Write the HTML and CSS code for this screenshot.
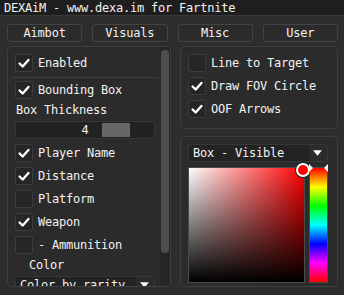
FILE: index.html
```html
<!DOCTYPE html>
<html lang="en">
<head>
    <meta charset="UTF-8">
    <meta name="viewport" content="width=device-width, initial-scale=1.0">
    <title>DEXAiM</title>
    <link rel="stylesheet" href="styles.css">
</head>
<body>
    <div class="window">
        <div class="titlebar">DEXAiM - www.dexa.im for Fartnite</div>

        <div class="tabs">
            <button class="tab">Aimbot</button>
            <button class="tab">Visuals</button>
            <button class="tab">Misc</button>
            <button class="tab">User</button>
        </div>

        <div class="columns">
            <div class="panel panel-left">
                <div class="panel-body">
                    <div class="check on"><span class="box"><svg viewBox="0 0 18 18"><polyline points="4,9.5 7.5,13 14,5.5"/></svg></span>Enabled</div>
                    <div class="separator"></div>
                    <div class="check on"><span class="box"><svg viewBox="0 0 18 18"><polyline points="4,9.5 7.5,13 14,5.5"/></svg></span>Bounding Box</div>
                    <div class="text">Box Thickness</div>
                    <div class="slider">
                        <span class="slider-value">4</span>
                        <span class="slider-grab"></span>
                    </div>
                    <div class="check on"><span class="box"><svg viewBox="0 0 18 18"><polyline points="4,9.5 7.5,13 14,5.5"/></svg></span>Player Name</div>
                    <div class="check on"><span class="box"><svg viewBox="0 0 18 18"><polyline points="4,9.5 7.5,13 14,5.5"/></svg></span>Distance</div>
                    <div class="check"><span class="box"></span>Platform</div>
                    <div class="check on"><span class="box"><svg viewBox="0 0 18 18"><polyline points="4,9.5 7.5,13 14,5.5"/></svg></span>Weapon</div>
                    <div class="check"><span class="box"></span>- Ammunition</div>
                    <div class="text indent">Color</div>
                    <div class="combo">
                        <span class="combo-text">Color by rarity</span>
                        <span class="combo-arrow"><svg viewBox="0 0 18 18"><polygon points="4,6 14,6 9,12"/></svg></span>
                    </div>
                </div>
                <div class="scrollbar"><div class="thumb"></div></div>
            </div>

            <div class="right">
                <div class="panel panel-top">
                    <div class="check"><span class="box"></span>Line to Target</div>
                    <div class="check on"><span class="box"><svg viewBox="0 0 18 18"><polyline points="4,9.5 7.5,13 14,5.5"/></svg></span>Draw FOV Circle</div>
                    <div class="check on"><span class="box"><svg viewBox="0 0 18 18"><polyline points="4,9.5 7.5,13 14,5.5"/></svg></span>OOF Arrows</div>
                </div>
                <div class="panel panel-color">
                    <div class="combo">
                        <span class="combo-text">Box - Visible</span>
                        <span class="combo-arrow"><svg viewBox="0 0 18 18"><polygon points="4,6 14,6 9,12"/></svg></span>
                    </div>
                    <div class="picker">
                        <div class="sv">
                            <span class="sv-marker"></span>
                        </div>
                        <div class="hue">
                            <span class="hue-arrow hue-arrow-left"></span>
                            <span class="hue-arrow hue-arrow-right"></span>
                        </div>
                    </div>
                </div>
            </div>
        </div>
    </div>
</body>
</html>
```

FILE: styles.css
```css
* {
    box-sizing: border-box;
}

body {
    margin: 0;
    background: #2d2d2d;
    color: #f2f2f2;
    font-family: "DejaVu Sans Mono", monospace;
    font-size: 12px;
    letter-spacing: -0.22px;
    overflow: hidden;
}

.window {
    width: 344px;
    height: 295px;
}

.titlebar {
    height: 16px;
    line-height: 16px;
    padding-left: 4px;
    background: #1e1e1e;
    border-bottom: 1px solid #383838;
    white-space: nowrap;
}

.tabs {
    display: flex;
    gap: 10px;
    padding: 8px 6px 0 7px;
}

.tab {
    flex: 1;
    height: 18px;
    padding: 0;
    background: #2b2b2b;
    border: 1px solid #444;
    border-radius: 3px;
    color: #f2f2f2;
    font: inherit;
    letter-spacing: inherit;
}

.columns {
    display: flex;
    gap: 9px;
    padding: 4px 6px 0 7px;
}

.panel {
    background: #2b2b2b;
    border: 1px solid #3e3e3e;
    border-radius: 5px;
    overflow: hidden;
}

.panel-left {
    position: relative;
    width: 164px;
    height: 241px;
}

.panel-body {
    display: flex;
    flex-direction: column;
    gap: 5px;
    padding: 7px 0 0 7px;
    width: 147px;
}

.right {
    flex: 1;
    display: flex;
    flex-direction: column;
    gap: 7px;
}

.panel-top {
    height: 83px;
    display: flex;
    flex-direction: column;
    gap: 5px;
    padding: 7px 0 0 7px;
}

.panel-color {
    height: 151px;
    padding: 7px 0 0 7px;
}

/* checkbox rows */
.check {
    display: flex;
    align-items: center;
    gap: 5px;
    height: 18px;
    white-space: nowrap;
}

.box {
    width: 18px;
    height: 18px;
    flex: none;
    background: #262626;
    border: 1px solid #3c3c3c;
    border-radius: 2px;
    display: flex;
}

.box svg {
    width: 16px;
    height: 16px;
}

.box polyline {
    fill: none;
    stroke: #fff;
    stroke-width: 2.6;
    stroke-linecap: round;
    stroke-linejoin: round;
}

.separator {
    height: 1px;
    background: #3e3e3e;
    margin: 0 -3px -2px -3px;
}

.text {
    height: 12px;
    line-height: 12px;
    padding-left: 1px;
}

.indent {
    padding-left: 14px;
}

/* slider */
.slider {
    position: relative;
    height: 18px;
    background: #222;
    border: 1px solid #363636;
    border-radius: 2px;
    text-align: center;
    line-height: 16px;
}

.slider-value {
    position: relative;
    z-index: 1;
}

.slider-grab {
    position: absolute;
    left: 86px;
    top: 1px;
    width: 28px;
    height: 14px;
    background: #676767;
    border-radius: 1px;
}

/* combo */
.combo {
    display: flex;
    height: 18px;
    flex: none;
    background: #232323;
    border: 1px solid #363636;
    border-radius: 2px;
    line-height: 16px;
}

.combo-text {
    flex: 1;
    padding-left: 4px;
    white-space: nowrap;
    overflow: hidden;
}

.combo-arrow {
    width: 18px;
    background: #2b2b2b;
    display: flex;
}

.combo-arrow svg {
    width: 17px;
    height: 16px;
}

.combo-arrow polygon {
    fill: #fff;
}

.panel-color .combo {
    width: 140px;
}

/* colour picker */
.picker {
    display: flex;
    gap: 4px;
    margin-top: 5px;
}

.sv {
    position: relative;
    width: 117px;
    height: 116px;
    border: 1px solid #4a4a4a;
    background:
        linear-gradient(to bottom, rgba(0, 0, 0, 0), #000),
        linear-gradient(to right, #fff, rgba(255, 255, 255, 0)),
        #ff0000;
}

.sv-marker {
    position: absolute;
    left: 107px;
    top: -5px;
    width: 14px;
    height: 14px;
    border-radius: 50%;
    background: #ff0000;
    border: 2px solid #fff;
    box-shadow: 0 0 0 1px #222;
}

.hue {
    position: relative;
    width: 19px;
    height: 116px;
    border: 1px solid #4a4a4a;
    background: linear-gradient(to bottom, #f00 0%, #ff0 16.7%, #0f0 33.3%, #0ff 50%, #00f 66.7%, #f0f 83.3%, #f00 100%);
}

.hue-arrow {
    position: absolute;
    top: -4px;
    width: 0;
    height: 0;
    border-top: 4px solid transparent;
    border-bottom: 4px solid transparent;
}

.hue-arrow-left {
    left: -1px;
    border-left: 4px solid #fff;
}

.hue-arrow-right {
    right: -1px;
    border-right: 4px solid #fff;
}

/* scrollbar */
.scrollbar {
    position: absolute;
    top: 0;
    right: 0;
    width: 10px;
    height: 100%;
    background: #262626;
    padding: 3px 1px 0 1px;
}

.thumb {
    height: 203px;
    background: #4e4e4e;
    border-radius: 4px;
}
```
